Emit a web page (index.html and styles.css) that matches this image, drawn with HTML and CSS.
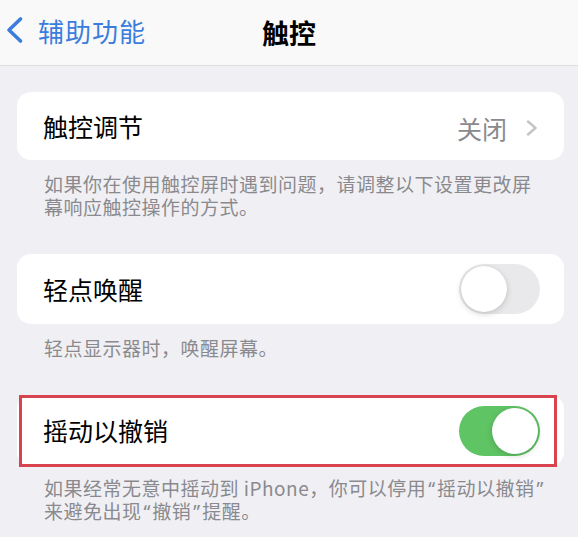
FILE: index.html
```html
<!DOCTYPE html>
<html lang="zh-CN">
<head>
<meta charset="utf-8">
<title>触控</title>
<link rel="stylesheet" href="styles.css">
</head>
<body>
<header class="nav">
  <div class="back">
    <svg class="back-icon" width="20" height="30" viewBox="0 0 20 30"><path d="M15.5 3 L4 14 L15.5 25" fill="none" stroke="#3b7ddd" stroke-width="3.6" stroke-linecap="round" stroke-linejoin="round"/></svg>
    <span class="back-text">辅助功能</span>
  </div>
  <div class="title">触控</div>
  <div></div>
</header>
<main class="content">
  <section class="card card-1">
    <span class="label">触控调节</span>
    <span class="value">关闭<svg class="chev" width="12" height="16" viewBox="0 0 12 16"><path d="M2 1.5 L9.5 8 L2 14.5" fill="none" stroke="#c4c4c8" stroke-width="2.4" stroke-linecap="round" stroke-linejoin="round"/></svg></span>
  </section>
  <div class="footer">
    <span class="line">如果你在使用触控屏时遇到问题，请调整以下设置更改屏</span>
    <span class="line">幕响应触控操作的方式。</span>
  </div>
  <section class="card card-2">
    <span class="label">轻点唤醒</span>
    <span class="toggle"><span class="knob"></span></span>
  </section>
  <div class="footer">
    <span class="line">轻点显示器时，唤醒屏幕。</span>
  </div>
  <section class="card card-3">
    <span class="label">摇动以撤销</span>
    <span class="toggle on"><span class="knob"></span></span>
  </section>
  <div class="footer footer-3">
    <span class="line">如果经常无意中摇动到 iPhone，你可以停用<span class="q">“</span>摇动以撤销<span class="q">”</span></span>
    <span class="line">来避免出现<span class="q">“</span>撤销<span class="q">”</span>提醒。</span>
  </div>
</main>
</body>
</html>
```
FILE: styles.css
```css
html, body {
  margin: 0;
  padding: 0;
}
body {
  width: 578px;
  height: 537px;
  overflow: hidden;
  background: #f0f0f4;
  font-family: "Noto Sans CJK SC", "Noto Sans", sans-serif;
  color: #000;
}
.nav {
  height: 66px;
  box-sizing: border-box;
  background: #f9f9f9;
  border-bottom: 1px solid #dedee0;
  display: grid;
  grid-template-columns: 1fr auto 1fr;
  align-items: center;
}
.back {
  display: flex;
  align-items: center;
  padding-left: 5px;
  margin-top: -4px;
}
.back-icon {
  display: block;
}
.back-text {
  margin-left: 13px;
  font-size: 26px;
  letter-spacing: 1px;
  color: #3b7ddd;
}
.title {
  font-size: 27px;
  font-weight: 700;
}
.content {
  padding: 26px 14px 0 17px;
}
.card {
  background: #fff;
  border-radius: 14px;
  display: flex;
  align-items: center;
  justify-content: space-between;
  padding: 0 24px 0 26px;
  box-sizing: border-box;
}
.card-1 {
  height: 68px;
}
.card-2 {
  height: 70px;
}
.card-3 {
  height: 71px;
  position: relative;
}
.card-3::after {
  content: "";
  position: absolute;
  left: 2px;
  top: 0;
  width: 538px;
  height: 72px;
  box-sizing: border-box;
  border: 3px solid #d9434f;
}
.label {
  font-size: 25px;
  line-height: 1;
}
.value {
  display: flex;
  align-items: center;
  font-size: 25px;
  color: #8a8a8e;
  line-height: 1;
  margin-top: 4px;
  margin-right: 2px;
}
.chev {
  margin-left: 19px;
  display: block;
}
.toggle {
  width: 81px;
  height: 50px;
  border-radius: 25px;
  background: #e9e9eb;
  position: relative;
  flex: none;
}
.toggle.on {
  background: #5fc464;
}
.knob {
  position: absolute;
  top: 2px;
  left: 2px;
  width: 46px;
  height: 46px;
  border-radius: 50%;
  background: #fff;
  box-shadow: 0 2px 6px rgba(0, 0, 0, 0.16), 0 0 1px rgba(0, 0, 0, 0.14);
}
.toggle.on .knob {
  left: 33px;
}
.footer {
  margin: 12px 0 36px;
  padding-left: 27px;
  font-size: 19px;
  letter-spacing: 0.5px;
  color: #8a8a8e;
}
.line {
  display: block;
  height: 23px;
  line-height: 23px;
  white-space: nowrap;
}
.q {
  font-family: "Noto Sans", sans-serif;
  letter-spacing: 0;
  padding: 0 2px;
}
.footer-3 {
  margin-top: 10px;
}
```
